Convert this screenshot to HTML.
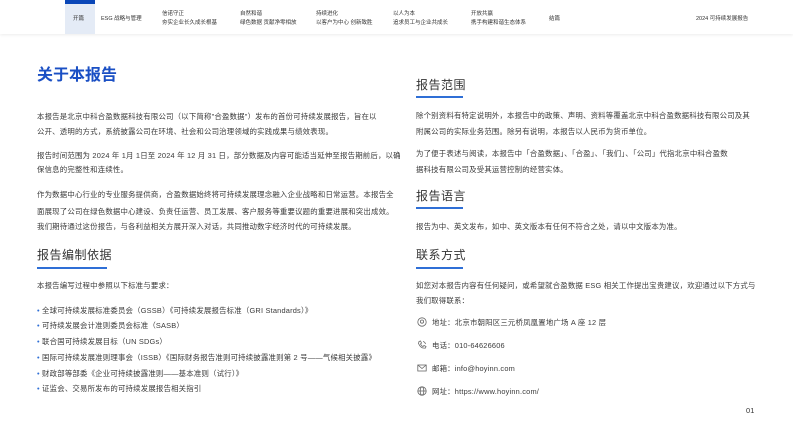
<!DOCTYPE html>
<html><head><meta charset="utf-8"><style>
*{margin:0;padding:0;box-sizing:border-box}
body{width:793px;height:446px;background:#fff;position:relative;overflow:hidden;font-family:"Liberation Sans","Noto Sans CJK SC",sans-serif;color:#444}
.nav{position:absolute;left:0;top:0;width:793px;height:34px;background:#fff;box-shadow:0 1px 3px rgba(0,0,0,0.08)}
.tab{position:absolute;left:65px;top:0;width:30px;height:34px;background:#e4ebf6}
.tab:before{content:"";position:absolute;left:0;top:0;width:30px;height:4px;background:#0a47b8}
.n{position:absolute;font-size:5.5px;color:#333;line-height:9px;white-space:nowrap}
.t{position:absolute;font-size:7.4px;line-height:9px;white-space:nowrap;color:#3a3a3a;letter-spacing:0.2px}
.h{position:absolute;font-size:12px;color:#333;line-height:14px;white-space:nowrap;letter-spacing:0.5px}
.u{position:absolute;height:2px;background:#2f6fd6}
.ic{position:absolute;width:10px;height:10px}
</style></head><body>
<div class="nav"><div class="tab"></div>
<div class="n" style="left:73px;top:14.5px">开篇</div>
<div class="n" style="left:101px;top:14.5px">ESG 战略与管理</div>
<div class="n" style="left:162px;top:10px">信诺守正<br>夯实企业长久成长根基</div>
<div class="n" style="left:240px;top:10px">自然和谐<br>绿色数据 贡献净零相放</div>
<div class="n" style="left:316px;top:10px">持续进化<br>以客户为中心 创新致胜</div>
<div class="n" style="left:393px;top:10px">以人为本<br>追求员工与企业共成长</div>
<div class="n" style="left:471px;top:10px">开放共赢<br>携手构建和谐生态体系</div>
<div class="n" style="left:549px;top:14.5px">结篇</div>
<div class="n" style="left:696px;top:14.5px">2024 可持续发展报告</div>
</div>

<div style="position:absolute;left:37px;top:66px;font-size:16px;font-weight:bold;color:#1a4fc4;line-height:20px">关于本报告</div>

<div class="t" style="left:37px;top:112px">本报告是北京中科合盈数据科技有限公司（以下简称"合盈数据"）发布的首份可持续发展报告，旨在以</div>
<div class="t" style="left:37px;top:127px">公开、透明的方式，系统披露公司在环境、社会和公司治理领域的实践成果与绩效表现。</div>
<div class="t" style="left:37px;top:151px">报告时间范围为 2024 年 1月 1日至 2024 年 12 月 31 日，部分数据及内容可能适当延伸至报告期前后，以确</div>
<div class="t" style="left:37px;top:165px">保信息的完整性和连续性。</div>
<div class="t" style="left:37px;top:190px">作为数据中心行业的专业服务提供商，合盈数据始终将可持续发展理念融入企业战略和日常运营。本报告全</div>
<div class="t" style="left:37px;top:207px">面展现了公司在绿色数据中心建设、负责任运营、员工发展、客户服务等重要议题的重要进展和突出成效。</div>
<div class="t" style="left:37px;top:222px">我们期待通过这份报告，与各利益相关方展开深入对话，共同推动数字经济时代的可持续发展。</div>

<div class="h" style="left:37px;top:248px">报告编制依据</div>
<div class="u" style="left:37px;top:267px;width:70px"></div>
<div class="t" style="left:37px;top:281px">本报告编写过程中参照以下标准与要求：</div>
<div class="t" style="left:37px;top:306px"><span style="color:#2f6fd6">•</span> 全球可持续发展标准委员会（GSSB）《可持续发展报告标准（GRI Standards）》</div>
<div class="t" style="left:37px;top:321px"><span style="color:#2f6fd6">•</span> 可持续发展会计准则委员会标准（SASB）</div>
<div class="t" style="left:37px;top:337px"><span style="color:#2f6fd6">•</span> 联合国可持续发展目标（UN SDGs）</div>
<div class="t" style="left:37px;top:353px"><span style="color:#2f6fd6">•</span> 国际可持续发展准则理事会（ISSB）《国际财务报告准则可持续披露准则第 2 号——气候相关披露》</div>
<div class="t" style="left:37px;top:369px"><span style="color:#2f6fd6">•</span> 财政部等部委《企业可持续披露准则——基本准则（试行）》</div>
<div class="t" style="left:37px;top:384px"><span style="color:#2f6fd6">•</span> 证监会、交易所发布的可持续发展报告相关指引</div>

<div class="h" style="left:416px;top:78px">报告范围</div>
<div class="u" style="left:416px;top:96px;width:47px"></div>
<div class="t" style="left:416px;top:111px">除个别资料有特定说明外，本报告中的政策、声明、资料等覆盖北京中科合盈数据科技有限公司及其</div>
<div class="t" style="left:416px;top:127px">附属公司的实际业务范围。除另有说明，本报告以人民币为货币单位。</div>
<div class="t" style="left:416px;top:149px">为了便于表述与阅读，本报告中「合盈数据」、「合盈」、「我们」、「公司」代指北京中科合盈数</div>
<div class="t" style="left:416px;top:165px">据科技有限公司及受其运营控制的经营实体。</div>
<div class="h" style="left:416px;top:189px">报告语言</div>
<div class="u" style="left:416px;top:207px;width:47px"></div>
<div class="t" style="left:416px;top:222px">报告为中、英文发布，如中、英文版本有任何不符合之处，请以中文版本为准。</div>

<div class="h" style="left:416px;top:248px">联系方式</div>
<div class="u" style="left:416px;top:267px;width:47px"></div>
<div class="t" style="left:416px;top:281px">如您对本报告内容有任何疑问，或希望就合盈数据 ESG 相关工作提出宝贵建议，欢迎通过以下方式与</div>
<div class="t" style="left:416px;top:296px">我们取得联系：</div>

<svg class="ic" style="left:417px;top:317px" viewBox="0 0 10 10" fill="none" stroke="#666" stroke-width="0.8"><circle cx="5" cy="5" r="4.2"/><circle cx="5" cy="4.6" r="1.6"/></svg>
<div class="t" style="left:432px;top:318px">地址：北京市朝阳区三元桥凤凰置地广场 A 座 12 层</div>
<svg class="ic" style="left:417px;top:340px" viewBox="0 0 10 10" fill="none" stroke="#666" stroke-width="0.8"><path d="M2 1.5 L3.5 1 L4.5 3 L3.5 4 Q4.5 6 6 6.5 L7 5.5 L9 6.5 L8.5 8 Q4 9 1.5 3.5 Z"/><path d="M6 1.5 Q8 2 8.5 4"/></svg>
<div class="t" style="left:432px;top:341px">电话：010-64626606</div>
<svg class="ic" style="left:417px;top:363px" viewBox="0 0 10 10" fill="none" stroke="#666" stroke-width="0.8"><rect x="0.8" y="2" width="8.4" height="6"/><path d="M0.8 2 L5 5.5 L9.2 2"/></svg>
<div class="t" style="left:432px;top:364px">邮箱：info@hoyinn.com</div>
<svg class="ic" style="left:417px;top:386px" viewBox="0 0 10 10" fill="none" stroke="#666" stroke-width="0.8"><circle cx="5" cy="5" r="4.2"/><ellipse cx="5" cy="5" rx="1.8" ry="4.2"/><path d="M0.8 5 H9.2"/></svg>
<div class="t" style="left:432px;top:387px">网址：https://www.hoyinn.com/</div>

<div class="t" style="left:746px;top:406px;color:#333">01</div>
</body></html>
